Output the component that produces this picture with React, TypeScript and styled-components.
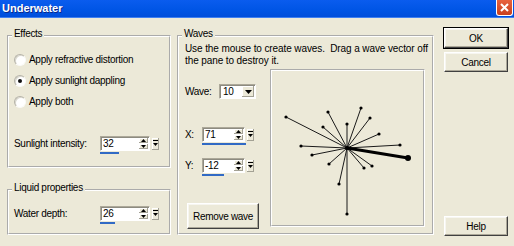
import React from "react";
import styled, { createGlobalStyle } from "styled-components";

const GlobalStyle = createGlobalStyle`
  html, body {
    margin: 0;
    padding: 0;
    background: #ece9d8;
  }
  body {
    font-family: "Liberation Sans", Arial, sans-serif;
    font-size: 10px;
    letter-spacing: -0.3px;
    color: #000;
  }
  * {
    box-sizing: border-box;
  }
`;

const Window = styled.div`
  width: 514px;
  height: 246px;
  overflow: hidden;
  background: #ece9d8;
`;

const TitleBar = styled.div`
  height: 18px;
  display: flex;
  justify-content: space-between;
  align-items: flex-start;
  background: linear-gradient(to bottom, #0a5cee 0%, #0055e5 55%, #004dd9 100%);
  box-shadow: inset 0 -1px 0 #3f80f2;
`;

const Title = styled.span`
  padding-left: 2px;
  font-weight: bold;
  font-size: 11px;
  letter-spacing: 0;
  line-height: 16px;
  color: #fff;
  text-shadow: 1px 1px 0 #0b2a8a;
`;

const CloseBox = styled.div`
  width: 17px;
  height: 16px;
  margin-right: 1px;
  display: flex;
  align-items: center;
  justify-content: center;
  background: linear-gradient(to bottom, #e8623f, #c8401f);
  border: 1px solid #fff;
  border-top: none;
  border-radius: 0 0 3px 3px;
`;

const Body = styled.div`
  display: flex;
  align-items: flex-start;
  padding: 10px 0 0 7px;
`;

const LeftCol = styled.div`
  display: flex;
  flex-direction: column;
  gap: 21px;
  margin-top: 7px;
`;

const Group = styled.div<{ $w: number; $h: number }>`
  position: relative;
  width: ${(p) => p.$w}px;
  height: ${(p) => p.$h}px;
  border: 2px groove #fff;
`;

const WavesGroup = styled(Group)`
  margin: 7px 0 0 6px;
`;

const Caption = styled.span`
  position: absolute;
  top: -10px;
  left: 3px;
  padding: 0 2px;
  line-height: 13px;
  background: #ece9d8;
`;

const GroupInner = styled.div`
  display: flex;
  flex-direction: column;
  padding: 12px 0 0 5px;
`;

const RadioRow = styled.label`
  height: 21px;
  display: flex;
  align-items: center;
  gap: 3px;
`;

const RadioDot = styled.span<{ $on?: boolean }>`
  width: 12px;
  height: 12px;
  border-radius: 50%;
  background: #fff;
  border: 1px solid;
  border-color: #b5b3a8 #fafaf7 #fafaf7 #b5b3a8;
  box-shadow: inset 1px 1px 0 #d9d7cd;
  display: flex;
  align-items: center;
  justify-content: center;
  &::after {
    content: "";
    width: 4px;
    height: 4px;
    border-radius: 50%;
    background: #111;
    display: ${(p) => (p.$on ? "block" : "none")};
  }
`;

const FieldRow = styled.div<{ $top: number }>`
  display: flex;
  align-items: flex-start;
  margin-top: ${(p) => p.$top}px;
`;

const FieldLabel = styled.span<{ $w: number }>`
  width: ${(p) => p.$w}px;
  line-height: 15px;
  white-space: nowrap;
  flex-shrink: 0;
`;

const SpinWrap = styled.div`
  display: flex;
  flex-direction: column;
`;

const SpinRow = styled.div`
  display: flex;
  align-items: center;
`;

const EditBox = styled.div<{ $w: number }>`
  width: ${(p) => p.$w}px;
  height: 15px;
  display: flex;
  align-items: center;
  padding-left: 2px;
  background: #fff;
  border: 1px solid;
  border-color: #aca899 #fff #fff #aca899;
  box-shadow: inset 1px 1px 0 #8d8b80;
`;

const Arrows = styled.div`
  margin-left: auto;
  margin-right: 1px;
  display: flex;
  flex-direction: column;
  gap: 1px;
`;

const ArrowBtn = styled.span`
  width: 9px;
  height: 5px;
  display: flex;
  align-items: center;
  justify-content: center;
  background: #ece9d8;
  box-shadow: inset -1px -1px 0 #a3a194, inset 1px 1px 0 #fff;
`;

const PopBtn = styled.span`
  width: 7px;
  height: 12px;
  margin-left: 2px;
  display: flex;
  align-items: center;
  justify-content: center;
  background: #ece9d8;
  box-shadow: inset -1px -1px 0 #a3a194, inset 1px 1px 0 #fff;
`;

const ValueBar = styled.div`
  height: 2px;
  margin-top: 1px;
  background: #316ac5;
`;

const WavesInner = styled.div`
  display: flex;
  flex-direction: column;
  padding: 6px 0 0 6px;
`;

const Hint = styled.p`
  margin: 0;
  font-size: 10px;
  letter-spacing: -0.1px;
  line-height: 12px;
  white-space: pre;
`;

const Lower = styled.div`
  display: flex;
  margin-top: 2px;
`;

const ControlCol = styled.div`
  width: 85px;
  display: flex;
  flex-direction: column;
  padding-top: 15px;
`;

const Combo = styled.div`
  width: 37px;
  height: 15px;
  display: flex;
  align-items: center;
  padding-left: 3px;
  background: #fff;
  border: 1px solid;
  border-color: #aca899 #fff #fff #aca899;
  box-shadow: inset 1px 1px 0 #8d8b80;
`;

const DropBtn = styled.span`
  width: 12px;
  height: 11px;
  margin-left: auto;
  margin-right: 1px;
  display: flex;
  align-items: center;
  justify-content: center;
  background: #ece9d8;
  box-shadow: inset -1px -1px 0 #a3a194, inset 1px 1px 0 #fff;
`;

const PushButton = styled.button<{ $w: number; $h: number; $default?: boolean }>`
  width: ${(p) => p.$w}px;
  height: ${(p) => p.$h}px;
  padding: 0;
  font: inherit;
  letter-spacing: inherit;
  color: #000;
  background: #ece9d8;
  border: 1px solid;
  border-color: #fff #404040 #404040 #fff;
  box-shadow: inset -1px -1px 0 #aca899, inset 1px 1px 0 #f7f6f0
    ${(p) => (p.$default ? ", 0 0 0 1px #000" : "")};
`;

const RemoveButton = styled(PushButton)`
  margin: 27px 0 0 2px;
`;

const Pane = styled.div`
  width: 155px;
  height: 158px;
  border: 2px groove #fff;
`;

const ButtonCol = styled.div`
  width: 64px;
  margin-left: 10px;
  display: flex;
  flex-direction: column;
  gap: 4px;
`;

const HelpButton = styled(PushButton)`
  margin-top: 140px;
`;

const UpTri = () => (
  <svg width="5" height="3" viewBox="0 0 5 3">
    <path d="M0 3 L2.5 0 L5 3 Z" fill="#000" />
  </svg>
);

const DownTri = () => (
  <svg width="5" height="3" viewBox="0 0 5 3">
    <path d="M0 0 L2.5 3 L5 0 Z" fill="#000" />
  </svg>
);

function SpinField({ value, min, max, w }: { value: number; min: number; max: number; w: number }) {
  const full = w + 8;
  const barW = Math.round(((value - min) / (max - min)) * full);
  return (
    <SpinWrap>
      <SpinRow>
        <EditBox $w={w}>
          <span>{value}</span>
          <Arrows>
            <ArrowBtn>
              <UpTri />
            </ArrowBtn>
            <ArrowBtn>
              <DownTri />
            </ArrowBtn>
          </Arrows>
        </EditBox>
        <PopBtn>
          <svg width="5" height="7" viewBox="0 0 5 7">
            <rect x="0" y="0" width="5" height="1" fill="#000" />
            <path d="M0 3 L2.5 6 L5 3 Z" fill="#000" />
          </svg>
        </PopBtn>
      </SpinRow>
      <ValueBar style={{ width: barW }} />
    </SpinWrap>
  );
}

// wave vectors, in pane coordinates
const CENTER = { x: 77, y: 79 };
const VECTORS = [
  [16, 48],
  [58, 43],
  [91, 39],
  [100, 49],
  [77, 55],
  [53, 58],
  [109, 65],
  [31, 77],
  [130, 76],
  [42, 86],
  [59, 95],
  [94, 99],
  [102, 97],
  [69, 115],
  [77, 145],
];
const ACTIVE = [138, 89];

function WavePane() {
  return (
    <Pane>
      <svg width="151" height="154" viewBox="2 2 151 154">
        {VECTORS.map(([x, y], i) => (
          <g key={i}>
            <line x1={CENTER.x} y1={CENTER.y} x2={x} y2={y} stroke="#1a1a1a" strokeWidth="1" />
            <circle cx={x} cy={y} r="1.6" fill="#000" />
          </g>
        ))}
        <line x1={CENTER.x} y1={CENTER.y} x2={ACTIVE[0]} y2={ACTIVE[1]} stroke="#000" strokeWidth="3" />
        <circle cx={ACTIVE[0]} cy={ACTIVE[1]} r="3" fill="#000" />
        <circle cx={CENTER.x} cy={CENTER.y} r="2" fill="#000" />
      </svg>
    </Pane>
  );
}

export default function App() {
  return (
    <Window>
      <GlobalStyle />
      <TitleBar>
        <Title>Underwater</Title>
        <CloseBox>
          <svg width="9" height="9" viewBox="0 0 9 9">
            <path d="M1 1 L8 8 M8 1 L1 8" stroke="#fff" strokeWidth="2" />
          </svg>
        </CloseBox>
      </TitleBar>
      <Body>
        <LeftCol>
          <Group $w={164} $h={133}>
            <Caption>Effects</Caption>
            <GroupInner>
              <RadioRow>
                <RadioDot />
                Apply refractive distortion
              </RadioRow>
              <RadioRow>
                <RadioDot $on />
                Apply sunlight dappling
              </RadioRow>
              <RadioRow>
                <RadioDot />
                Apply both
              </RadioRow>
              <FieldRow $top={24}>
                <FieldLabel $w={86}>Sunlight intensity:</FieldLabel>
                <SpinField value={32} min={0} max={100} w={50} />
              </FieldRow>
            </GroupInner>
          </Group>
          <Group $w={164} $h={46}>
            <Caption>Liquid properties</Caption>
            <GroupInner>
              <FieldRow $top={3}>
                <FieldLabel $w={86}>Water depth:</FieldLabel>
                <SpinField value={26} min={0} max={100} w={50} />
              </FieldRow>
            </GroupInner>
          </Group>
        </LeftCol>
        <WavesGroup $w={257} $h={200}>
          <Caption>Waves</Caption>
          <WavesInner>
            <Hint>
              {"Use the mouse to create waves.  Drag a wave vector off\nthe pane to destroy it."}
            </Hint>
            <Lower>
              <ControlCol>
                <FieldRow $top={0}>
                  <FieldLabel $w={34}>Wave:</FieldLabel>
                  <Combo>
                    10
                    <DropBtn>
                      <svg width="7" height="4" viewBox="0 0 7 4">
                        <path d="M0 0 L3.5 4 L7 0 Z" fill="#000" />
                      </svg>
                    </DropBtn>
                  </Combo>
                </FieldRow>
                <FieldRow $top={28}>
                  <FieldLabel $w={17}>X:</FieldLabel>
                  <SpinField value={71} min={-100} max={100} w={43} />
                </FieldRow>
                <FieldRow $top={13}>
                  <FieldLabel $w={17}>Y:</FieldLabel>
                  <SpinField value={-12} min={-100} max={100} w={43} />
                </FieldRow>
                <RemoveButton $w={72} $h={26}>
                  Remove wave
                </RemoveButton>
              </ControlCol>
              <WavePane />
            </Lower>
          </WavesInner>
        </WavesGroup>
        <ButtonCol>
          <PushButton $w={64} $h={20} $default>
            OK
          </PushButton>
          <PushButton $w={64} $h={20}>
            Cancel
          </PushButton>
          <HelpButton $w={64} $h={20}>
            Help
          </HelpButton>
        </ButtonCol>
      </Body>
    </Window>
  );
}
